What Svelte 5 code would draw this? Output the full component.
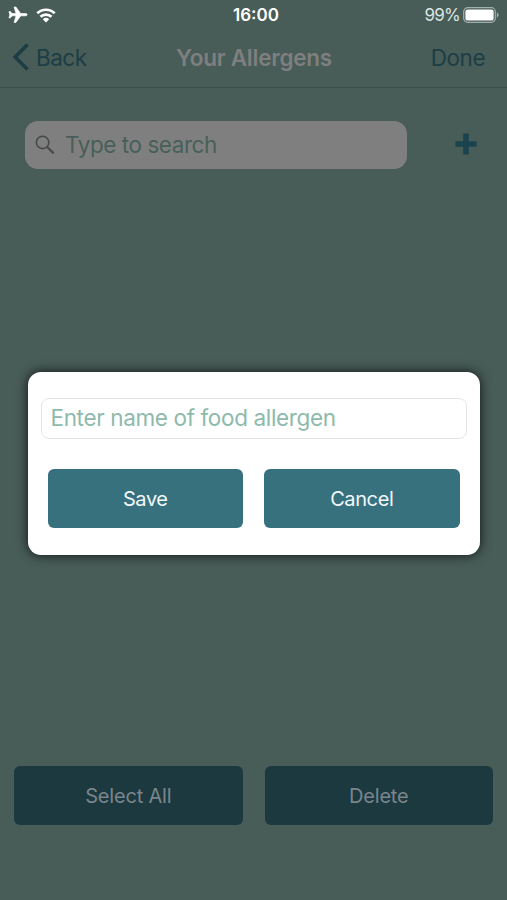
<script lang="ts">
  type Props = {
    onSave?: (name: string) => void;
    onCancel?: () => void;
  };

  let { onSave = () => {}, onCancel = () => {} }: Props = $props();

  let search = $state('');
  let allergen = $state('');

  function handleSave(): void {
    onSave(allergen.trim());
  }
</script>

<div class="screen">
  <header class="status-bar">
    <div class="signals">
      <svg width="20" height="18" viewBox="0 0 20 18" aria-label="Airplane mode">
        <path
          fill="currentColor"
          stroke="currentColor"
          stroke-width=".7"
          stroke-linejoin="round"
          d="M19.2 8.7c0 .7-1 1.1-2.2 1.1h-4.3L7.9 16.4H6.1l2-6.6H4.1L2.3 11.9H1l.8-3.2L1 5.5h1.3l1.8 2.1h4L6.1 1h1.8l4.8 6.6H17c1.2 0 2.2.4 2.2 1.1z"
        />
      </svg>
      <svg width="20" height="15" viewBox="0 0 20 15" aria-label="Wi-Fi">
        <g fill="none" stroke="currentColor" stroke-width="2.7">
          <path d="M1.3 5.3a12.4 12.4 0 0 1 17.4 0" />
          <path d="M4.5 8.8a7.8 7.8 0 0 1 11 0" />
        </g>
        <path fill="currentColor" d="M10 14.4l-3.2-3.2a4.5 4.5 0 0 1 6.4 0z" />
      </svg>
    </div>
    <span class="time">16:00</span>
    <div class="battery">
      <span class="percent">99%</span>
      <svg width="36" height="16" viewBox="0 0 36 16" aria-hidden="true">
        <rect x=".7" y=".7" width="31.6" height="14.6" rx="4" fill="none" stroke="#a1b0ab" stroke-width="1.2" />
        <rect x="2.4" y="2.4" width="28.2" height="11.2" rx="2.2" fill="#fff" />
        <path d="M33.8 5.4c1.2.4 1.8 1.4 1.8 2.6s-.6 2.2-1.8 2.6z" fill="#a1b0ab" />
      </svg>
    </div>
  </header>

  <nav class="nav-bar">
    <button type="button" class="back">
      <svg width="18" height="30" viewBox="0 0 18 30" aria-hidden="true">
        <path d="M15.6 2.4L3.2 15l12.4 12.6" fill="none" stroke="currentColor" stroke-width="3.6" />
      </svg>
      <span>Back</span>
    </button>
    <h1>Your Allergens</h1>
    <button type="button" class="done"><span>Done</span></button>
  </nav>

  <div class="search-row">
    <label class="search">
      <svg width="20" height="20" viewBox="0 0 20 20" aria-hidden="true">
        <g fill="none" stroke="currentColor">
          <circle cx="7.6" cy="7.4" r="6.2" stroke-width="1.6" />
          <path d="M12.2 12l6.5 6.4" stroke-width="2.2" />
        </g>
      </svg>
      <input type="text" placeholder="Type to search" bind:value={search} />
    </label>
    <button type="button" class="add" aria-label="Add allergen">
      <svg width="22" height="22" viewBox="0 0 22 22">
        <path d="M11 .5v21M.5 11h21" stroke="currentColor" stroke-width="5.6" />
      </svg>
    </button>
  </div>

  <footer class="actions">
    <button type="button" class="select-all">Select All</button>
    <button type="button">Delete</button>
  </footer>

  <div class="overlay">
    <div class="dialog" role="dialog" aria-label="Add allergen">
      <input type="text" placeholder="Enter name of food allergen" bind:value={allergen} />
      <div class="dialog-buttons">
        <button type="button" onclick={handleSave}>Save</button>
        <button type="button" onclick={onCancel}>Cancel</button>
      </div>
    </div>
  </div>
</div>

<style>
  :global(body) {
    margin: 0;
    background: #485c58;
  }

  .screen {
    position: relative;
    box-sizing: border-box;
    display: flex;
    flex-direction: column;
    width: 507px;
    height: 900px;
    overflow: hidden;
    background: #485c58;
    font-family: Inter, 'Liberation Sans', sans-serif;
  }

  button {
    margin: 0;
    padding: 0;
    border: none;
    background: none;
    font: inherit;
    letter-spacing: inherit;
    color: inherit;
    cursor: pointer;
  }

  input {
    box-sizing: border-box;
    min-width: 0;
    margin: 0;
    padding: 0;
    border: none;
    outline: none;
    background: none;
    font: inherit;
    letter-spacing: inherit;
  }

  svg {
    display: block;
    flex: none;
  }

  .status-bar {
    display: grid;
    grid-template-columns: 1fr auto 1fr;
    align-items: center;
    height: 30px;
    padding: 0 8px;
    color: #fff;
  }

  .signals {
    display: flex;
    align-items: center;
    gap: 8px;
  }

  .time {
    padding-left: 5px;
    font-size: 17px;
    font-weight: 600;
  }

  .battery {
    display: flex;
    align-items: center;
    justify-content: flex-end;
    gap: 4px;
    color: #dbe5e2;
  }

  .percent {
    margin-right: -1px;
    font-size: 17px;
    letter-spacing: -0.8px;
  }

  .nav-bar {
    display: grid;
    grid-template-columns: 1fr auto 1fr;
    align-items: center;
    box-sizing: border-box;
    height: 58px;
    padding: 0 22px 3px 12px;
    border-bottom: 1px solid #3b4e4b;
    color: #1d3e44;
    font-size: 22.5px;
    letter-spacing: -0.5px;
  }

  .back {
    display: flex;
    align-items: center;
    gap: 6px;
  }

  .nav-bar h1 {
    margin: 0;
    padding-left: 11px;
    color: #7e7f7f;
    font-size: 22.5px;
    font-weight: 600;
    letter-spacing: -0.25px;
  }

  .done {
    justify-self: end;
  }

  .search-row {
    display: flex;
    align-items: center;
    justify-content: space-between;
    padding: 33px 30px 0 25px;
  }

  .search {
    display: flex;
    align-items: center;
    gap: 10px;
    box-sizing: border-box;
    width: 382px;
    height: 48px;
    padding: 0 10px;
    border-radius: 13px;
    background: #7f7f7f;
    color: #464a4a;
    font-size: 22.5px;
    letter-spacing: -0.44px;
  }

  .search input {
    flex: 1;
    padding-bottom: 2px;
  }

  .search input::placeholder {
    color: #485f59;
    opacity: 1;
  }

  .add {
    padding-bottom: 2px;
    color: #1b434d;
  }

  .actions {
    display: grid;
    grid-template-columns: 1fr 1fr;
    gap: 22px;
    margin-top: auto;
    padding: 0 14px 75px;
  }

  .actions button {
    height: 59px;
    border-radius: 6px;
    background: #1b393f;
    color: #7b858c;
    font-size: 20px;
    letter-spacing: -0.2px;
  }

  .overlay {
    position: absolute;
    inset: 0;
    display: flex;
    align-items: center;
    justify-content: center;
    padding-top: 27px;
  }

  .dialog {
    box-sizing: border-box;
    width: 452px;
    height: 183px;
    padding: 26px 13px 0;
    border-radius: 13px;
    background: #fff;
    box-shadow: 0 0 12px rgba(0, 0, 0, 0.8);
  }

  .dialog input {
    width: 100%;
    height: 41px;
    padding: 0 9px 2px;
    border: 1.5px solid #e4e6e6;
    border-radius: 8px;
    font-size: 22.5px;
    letter-spacing: -0.36px;
  }

  .dialog input::placeholder {
    color: #8dbaab;
    opacity: 1;
  }

  .dialog-buttons {
    display: grid;
    grid-template-columns: 1fr 1fr;
    gap: 21px;
    padding: 30px 7px 0;
  }

  .dialog-buttons button {
    height: 59px;
    border-radius: 6px;
    background: #37717e;
    color: #f2f8fa;
    font-size: 20px;
    letter-spacing: -0.4px;
  }
</style>
